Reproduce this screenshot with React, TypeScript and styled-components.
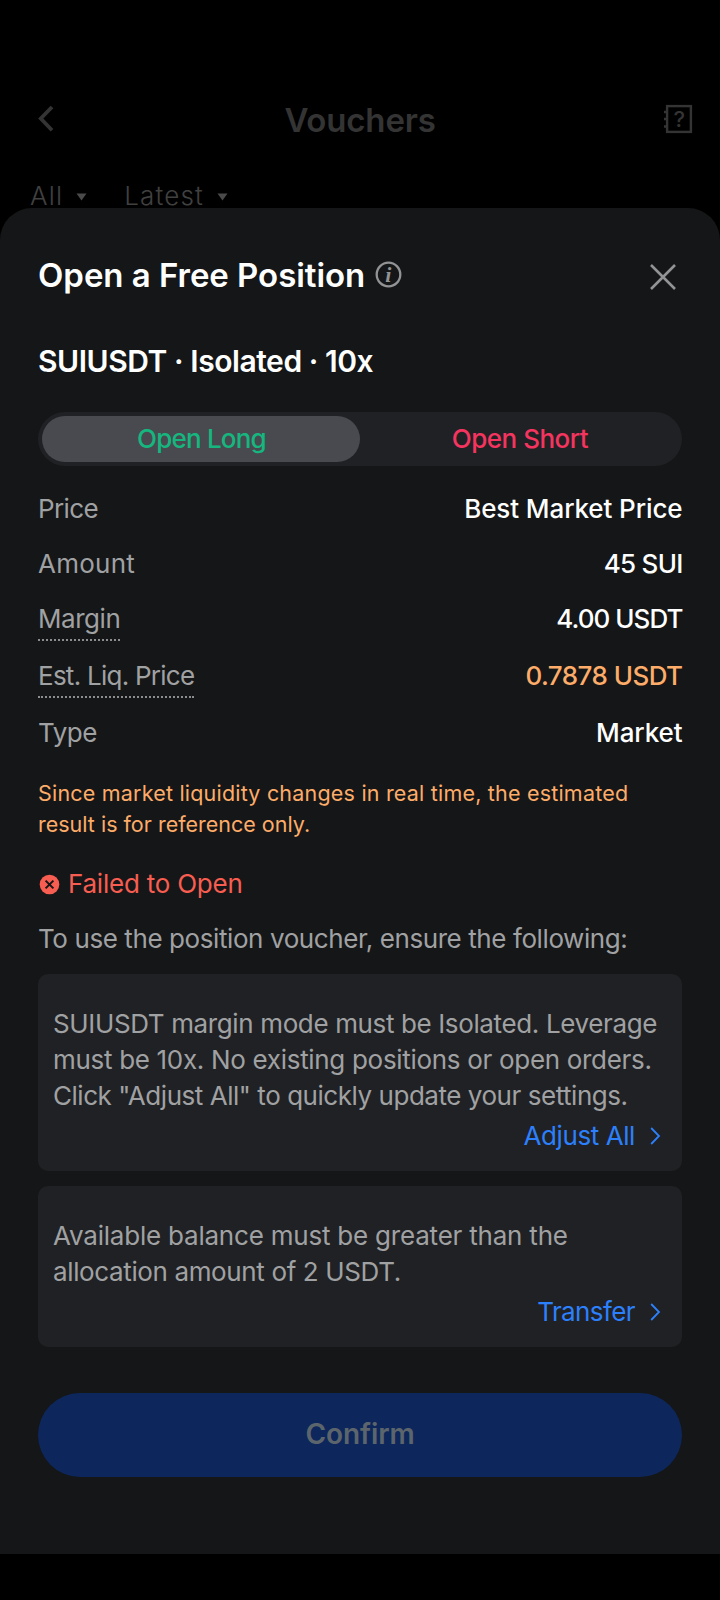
import React from "react";
import styled, { createGlobalStyle } from "styled-components";

const GlobalStyle = createGlobalStyle`
  *, *::before, *::after { box-sizing: border-box; }
  body { margin: 0; background: #000; }
`;

const Screen = styled.div`
  display: flex;
  flex-direction: column;
  width: 720px;
  height: 1600px;
  background: #000;
  font-family: Inter, "Liberation Sans", sans-serif;
  font-size: 26px;
  line-height: 36px;
  white-space: nowrap;
  overflow: hidden;
`;

/* Tracking varies with each string, so every text run takes it as a prop. */
const Run = styled.span<{ $track?: number }>`
  letter-spacing: ${(p) => p.$track ?? 0}px;
`;

const Line = styled(Run)`
  display: block;
`;

const TopBar = styled.header`
  display: grid;
  grid-template-columns: 60px 1fr 60px;
  align-items: center;
  height: 84px;
  margin-top: 78px;
  padding: 0 24px;
  color: #343434;
  flex: none;

  svg { display: block; margin-bottom: 2px; }
  svg:last-child { justify-self: end; }
`;

const PageTitle = styled.h1`
  margin: 0;
  font-size: 33px;
  font-weight: 600;
  line-height: 40px;
  text-align: center;
`;

const Filters = styled.nav`
  display: flex;
  gap: 37px;
  height: 46px;
  padding: 16px 0 0 30px;
  color: #404040;
  font-weight: 300;
  flex: none;
`;

const Filter = styled.div`
  display: flex;
  align-items: flex-start;
  gap: 13px;

  svg { margin-top: 15px; }
`;

const Sheet = styled.section`
  display: flex;
  flex-direction: column;
  height: 1346px;
  padding: 47px 38px 0;
  border-radius: 32px 32px 0 0;
  background: #151617;
  color: #a0a1a3;
  flex: none;
`;

const SheetHead = styled.div`
  display: flex;
  align-items: center;
  height: 40px;
  gap: 10px;
`;

const SheetTitle = styled.h2`
  margin: 0;
  color: #fff;
  font-size: 33px;
  font-weight: 600;
  line-height: 40px;
`;

const InfoIcon = styled.svg`
  margin-bottom: 2px;
`;

const CloseButton = styled.button`
  display: flex;
  margin: 4px 5px 0 auto;
  padding: 0;
  border: 0;
  background: none;
`;

const Pair = styled.h3`
  margin: 48px 0 33px;
  color: #fff;
  font-size: 30px;
  font-weight: 600;
  line-height: 36px;
`;

const Segmented = styled.div`
  display: grid;
  grid-template-columns: 318px 1fr;
  height: 54px;
  padding: 4px;
  border-radius: 27px;
  background: #202124;
`;

const Segment = styled.button<{ $side: "long" | "short"; $active?: boolean }>`
  padding: 0 0 0 ${(p) => (p.$side === "short" ? 2 : 1)}px;
  border: 0;
  border-radius: 23px;
  background: ${(p) => (p.$active ? "#484a50" : "transparent")};
  color: ${(p) => (p.$side === "long" ? "#16b67f" : "#f5345f")};
  font: 500 26px/46px Inter, "Liberation Sans", sans-serif;
`;

const Details = styled.dl`
  display: flex;
  flex-direction: column;
  gap: 19px;
  margin: 25px 0 27px;
`;

const Detail = styled.div<{ $hinted?: boolean }>`
  display: flex;
  justify-content: space-between;
  align-items: flex-start;
  height: ${(p) => (p.$hinted ? 38 : 36)}px;
`;

const Label = styled.dt<{ $hinted?: boolean }>`
  ${(p) => p.$hinted && "padding-bottom: 2px; border-bottom: 2px dotted #8c8d8f;"}
`;

const Value = styled.dd<{ $warn?: boolean }>`
  margin: 0 -0.5px 0 0;
  color: ${(p) => (p.$warn ? "#fdac69" : "#fff")};
  font-weight: 500;
`;

const Note = styled.p`
  margin: 0;
  color: #fdac69;
  font-size: 21.5px;
  line-height: 31px;
`;

const Failure = styled.div`
  display: flex;
  align-items: center;
  gap: 8px;
  margin: 26px 0 19px;
  padding-left: 1px;
  color: #f75d50;
`;

const Lead = styled.p`
  margin: 0 0 17px;
`;

const Requirements = styled.div`
  display: flex;
  flex-direction: column;
  gap: 15px;
`;

const Card = styled.article`
  display: flex;
  flex-direction: column;
  gap: 4px;
  padding: 32px 21px 17px 15px;
  border-radius: 10px;
  background: #202124;
`;

const CardText = styled.p`
  margin: 0;
`;

const Action = styled.a`
  display: flex;
  align-items: center;
  align-self: flex-end;
  gap: 15px;
  color: #2c80fb;
`;

const Confirm = styled.button`
  height: 84px;
  margin-top: 46px;
  padding: 0 0 2px;
  border: 0;
  border-radius: 42px;
  background: #0d275d;
  color: #5c656b;
  font: 600 28px/36px Inter, "Liberation Sans", sans-serif;
`;

const Caret = () => (
  <svg width="11" height="8" viewBox="0 0 11 8">
    <path d="M0.5 0.5h10L5.5 7.5z" fill="#4a4a4a" />
  </svg>
);

const Chevron = () => (
  <svg width="11" height="18" viewBox="0 0 11 18" fill="none" stroke="currentColor" strokeWidth="1.8">
    <path d="M1.2 1l7.8 8-7.8 8" />
  </svg>
);

const details = [
  { label: "Price", lt: -0.6, value: "Best Market Price", vt: -0.1 },
  { label: "Amount", lt: 0.25, value: "45 SUI", vt: -0.75 },
  { label: "Margin", lt: -0.45, value: "4.00 USDT", vt: -0.95, hinted: true },
  { label: "Est. Liq. Price", lt: -0.74, value: "0.7878 USDT", vt: -0.55, hinted: true, warn: true },
  { label: "Type", lt: -0.5, value: "Market", vt: -0.1 },
];

const requirements = [
  {
    lines: [
      { text: "SUIUSDT margin mode must be Isolated. Leverage", track: -0.37 },
      { text: "must be 10x. No existing positions or open orders.", track: -0.31 },
      { text: 'Click "Adjust All" to quickly update your settings.', track: -0.46 },
    ],
    action: "Adjust All",
    track: -0.42,
  },
  {
    lines: [
      { text: "Available balance must be greater than the", track: -0.21 },
      { text: "allocation amount of 2 USDT.", track: -0.37 },
    ],
    action: "Transfer",
    track: -0.6,
  },
];

export default function App() {
  return (
    <Screen>
      <GlobalStyle />
      <TopBar>
        <svg width="44" height="30" viewBox="0 0 44 30" fill="none" stroke="currentColor" strokeWidth="3.8">
          <path d="M28 3L16.8 14.5 28 26.2" />
        </svg>
        <PageTitle>
          <Run $track={-0.17}>Vouchers</Run>
        </PageTitle>
        <svg width="34" height="32" viewBox="0 0 34 32">
          <rect x="5.1" y="3.1" width="23.8" height="25.8" fill="none" stroke="currentColor" strokeWidth="2.4" />
          <path d="M2 9h3M2 16h3M2 23.5h3" stroke="currentColor" strokeWidth="2.6" />
          <text x="17.2" y="24" textAnchor="middle" fontSize="22" fontWeight="500" fill="currentColor">?</text>
        </svg>
      </TopBar>
      <Filters>
        <Filter>
          <Run $track={1.2}>All</Run>
          <Caret />
        </Filter>
        <Filter>
          <Run $track={1.15}>Latest</Run>
          <Caret />
        </Filter>
      </Filters>

      <Sheet>
        <SheetHead>
          <SheetTitle>
            <Run $track={-0.04}>Open a Free Position</Run>
          </SheetTitle>
          <InfoIcon width="27" height="27" viewBox="0 0 27 27">
            <circle cx="13.5" cy="13.5" r="11.8" fill="none" stroke="#929395" strokeWidth="2.3" />
            <text x="13.2" y="20.7" textAnchor="middle" fontFamily="Liberation Serif, serif" fontStyle="italic" fontWeight="700" fontSize="22" fill="#929395">i</text>
          </InfoIcon>
          <CloseButton aria-label="Close">
            <svg width="28" height="28" viewBox="0 0 28 28" stroke="#929395" strokeWidth="2.6">
              <path d="M2 2l24 24M26 2L2 26" />
            </svg>
          </CloseButton>
        </SheetHead>

        <Pair>
          <Run $track={-0.44}>SUIUSDT · Isolated · 10x</Run>
        </Pair>

        <Segmented>
          <Segment $side="long" $active>
            <Run $track={-0.8}>Open Long</Run>
          </Segment>
          <Segment $side="short">
            <Run $track={-0.5}>Open Short</Run>
          </Segment>
        </Segmented>

        <Details>
          {details.map((d) => (
            <Detail key={d.label} $hinted={d.hinted}>
              <Label $hinted={d.hinted}>
                <Line $track={d.lt}>{d.label}</Line>
              </Label>
              <Value $warn={d.warn}>
                <Run $track={d.vt}>{d.value}</Run>
              </Value>
            </Detail>
          ))}
        </Details>

        <Note>
          <Line $track={0.2}>Since market liquidity changes in real time, the estimated</Line>
          <Line $track={0}>result is for reference only.</Line>
        </Note>

        <Failure>
          <svg width="21" height="21" viewBox="0 0 21 21">
            <circle cx="10.5" cy="10.5" r="9.8" fill="#f75d50" />
            <path d="M6.6 6.6l7.8 7.8M14.4 6.6l-7.8 7.8" stroke="#151617" strokeWidth="2" />
          </svg>
          <Run $track={-0.23}>Failed to Open</Run>
        </Failure>
        <Lead>
          <Run $track={-0.41}>To use the position voucher, ensure the following:</Run>
        </Lead>

        <Requirements>
          {requirements.map((r) => (
            <Card key={r.action}>
              <CardText>
                {r.lines.map((l) => (
                  <Line key={l.text} $track={l.track}>{l.text}</Line>
                ))}
              </CardText>
              <Action>
                <Run $track={r.track}>{r.action}</Run>
                <Chevron />
              </Action>
            </Card>
          ))}
        </Requirements>

        <Confirm>
          <Run $track={-0.1}>Confirm</Run>
        </Confirm>
      </Sheet>
    </Screen>
  );
}
